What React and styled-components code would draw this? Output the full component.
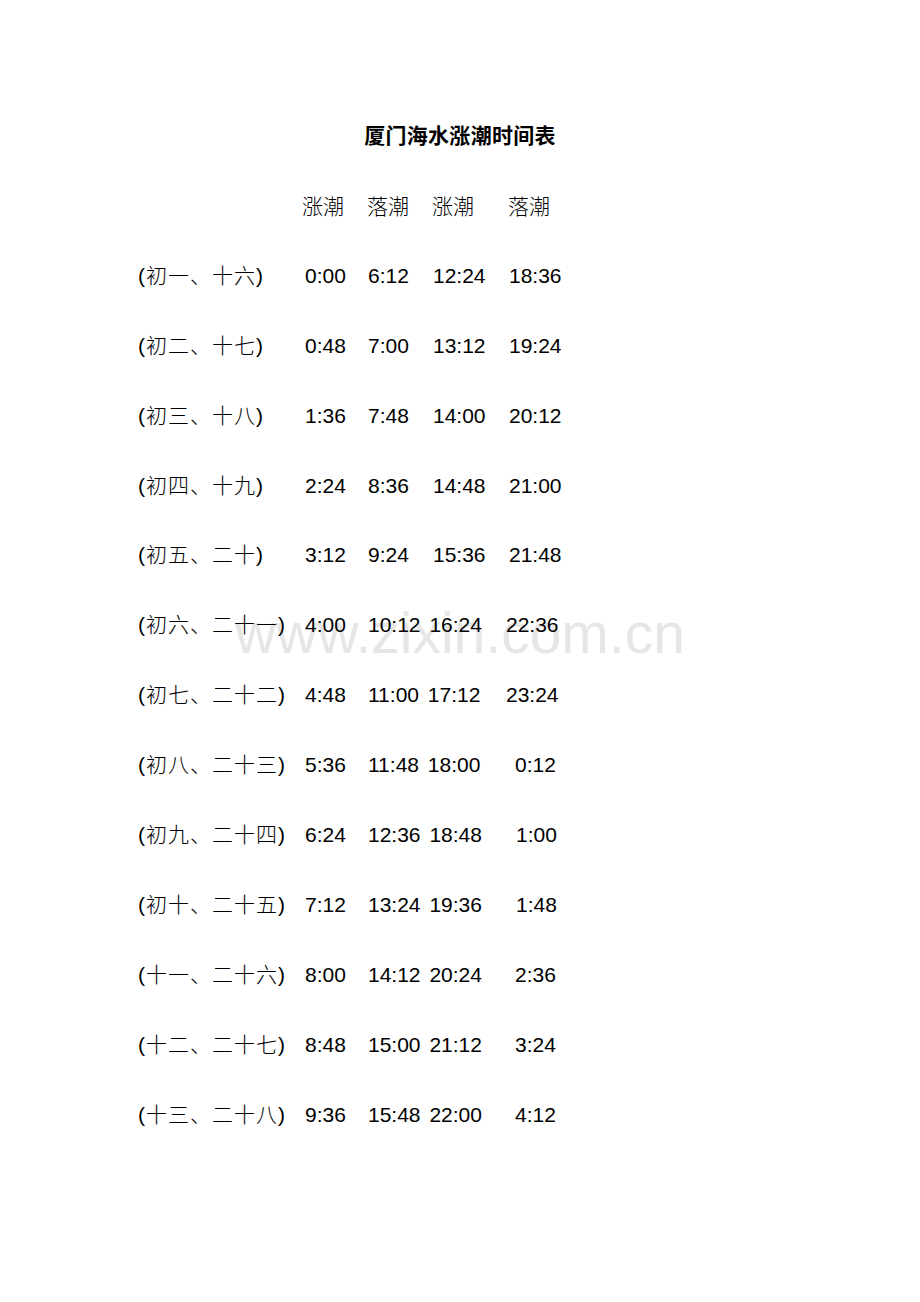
import React from 'react';
import styled, { createGlobalStyle } from 'styled-components';

const GlobalStyle = createGlobalStyle`
  html, body {
    margin: 0;
    padding: 0;
    background: #ffffff;
  }
  body {
    font-family: "Liberation Sans", "Noto Sans CJK SC", sans-serif;
    color: #000000;
  }
`;

const Page = styled.div`
  position: relative;
  width: 920px;
  height: 1302px;
  padding-top: 101px;
  box-sizing: border-box;
  overflow: hidden;
  background: #ffffff;
`;

const Watermark = styled.div`
  position: absolute;
  left: 0;
  right: 0;
  top: 605px;
  text-align: center;
  font-family: "Liberation Sans", Arial, sans-serif;
  font-size: 57px;
  line-height: 57px;
  color: #e6e6e6;
  z-index: 0;
  pointer-events: none;
`;

const Content = styled.div`
  position: relative;
  z-index: 1;
`;

const Title = styled.h1`
  margin: 0;
  height: 70px;
  line-height: 70px;
  text-align: center;
  font-family: "Liberation Sans", "Noto Sans CJK SC", sans-serif;
  font-size: 21px;
  font-weight: bold;
  letter-spacing: 0.3px;
`;

const Table = styled.div`
  padding-left: 138px;
`;

const Row = styled.div`
  display: grid;
  grid-template-columns: 167px 63px 65px 73px auto;
  height: 69.9px;
  line-height: 69.9px;
  font-size: 21px;
  white-space: nowrap;
  word-spacing: 3px;
`;

const Cell = styled.span`
  padding-left: ${p => p.$shift || 0}px;
  overflow: visible;
`;

const HeadCell = styled.span`
  margin-left: ${p => p.$shift || 0}px;
  font-family: "Noto Sans CJK SC", sans-serif;
  font-weight: 300;
`;

const Label = styled.span`
  font-family: "Liberation Sans", "Noto Sans CJK SC", sans-serif;
  font-weight: 300;
  letter-spacing: 1px;
`;

const rows = [
  ['(初一、十六)', '0:00', '6:12', '12:24', '18:36', 3],
  ['(初二、十七)', '0:48', '7:00', '13:12', '19:24', 3],
  ['(初三、十八)', '1:36', '7:48', '14:00', '20:12', 3],
  ['(初四、十九)', '2:24', '8:36', '14:48', '21:00', 3],
  ['(初五、二十)', '3:12', '9:24', '15:36', '21:48', 3],
  ['(初六、二十一)', '4:00', '10:12 16:24', '', '22:36', 0],
  ['(初七、二十二)', '4:48', '11:00 17:12', '', '23:24', 0],
  ['(初八、二十三)', '5:36', '11:48 18:00', '', '0:12', 9],
  ['(初九、二十四)', '6:24', '12:36 18:48', '', '1:00', 10],
  ['(初十、二十五)', '7:12', '13:24 19:36', '', '1:48', 10],
  ['(十一、二十六)', '8:00', '14:12 20:24', '', '2:36', 9],
  ['(十二、二十七)', '8:48', '15:00 21:12', '', '3:24', 9],
  ['(十三、二十八)', '9:36', '15:48 22:00', '', '4:12', 9],
];

export default function App() {
  return (
    <>
      <GlobalStyle />
      <Page>
        <Watermark>www.zixin.com.cn</Watermark>
        <Content>
          <Title>厦门海水涨潮时间表</Title>
          <Table>
            <Row>
              <span />
              <HeadCell $shift={-3}>涨潮</HeadCell>
              <HeadCell $shift={-1}>落潮</HeadCell>
              <HeadCell $shift={-1}>涨潮</HeadCell>
              <HeadCell $shift={2}>落潮</HeadCell>
            </Row>
            {rows.map(([label, a, b, c, d, shift]) => (
              <Row key={label}>
                <Label>{label}</Label>
                <Cell>{a}</Cell>
                <Cell>{b}</Cell>
                <Cell>{c}</Cell>
                <Cell $shift={shift}>{d}</Cell>
              </Row>
            ))}
          </Table>
        </Content>
      </Page>
    </>
  );
}
